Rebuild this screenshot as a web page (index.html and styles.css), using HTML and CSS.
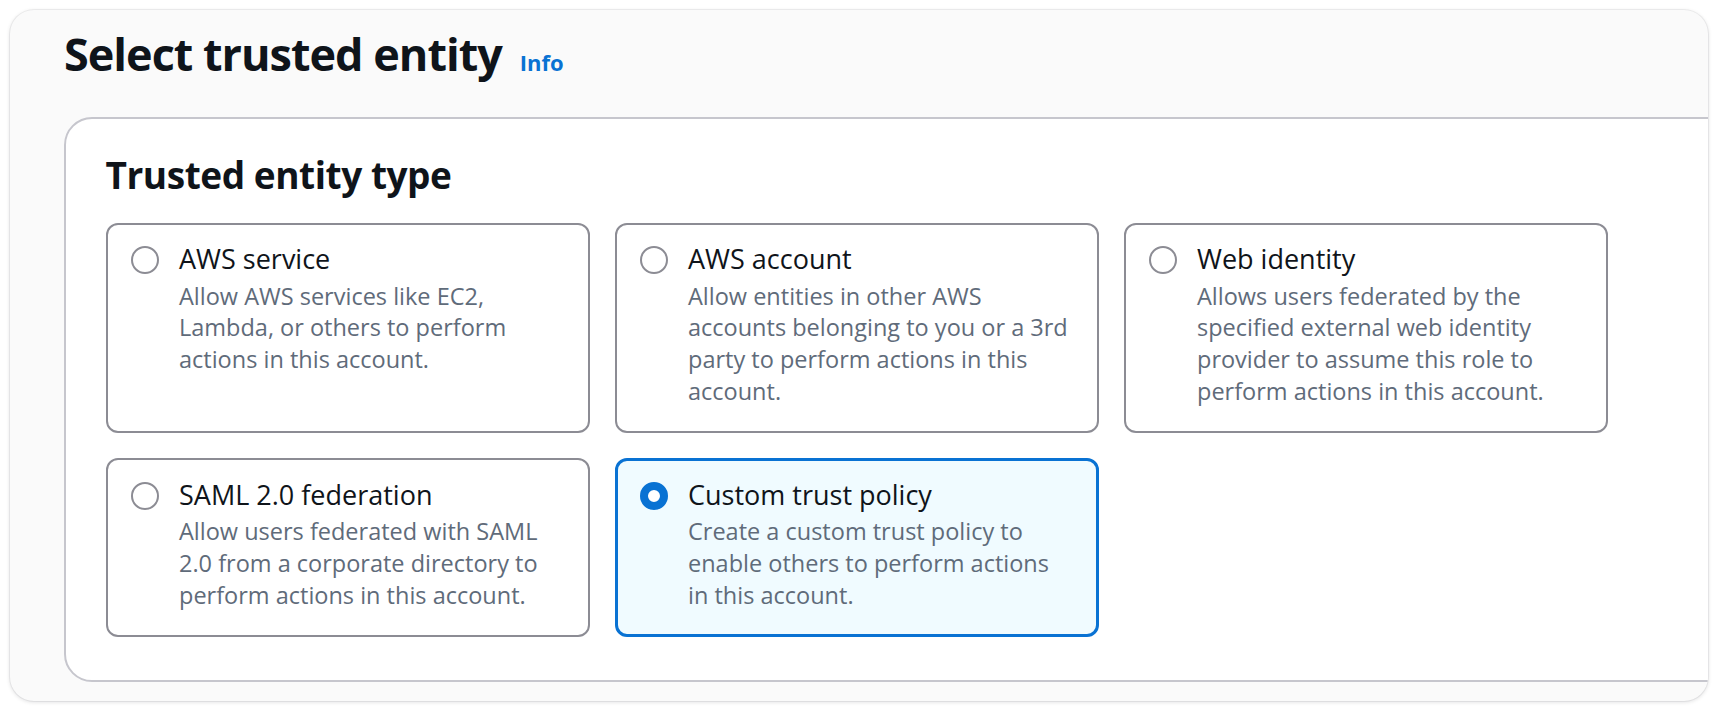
FILE: index.html
```html
<!DOCTYPE html>
<html lang="en">
<head>
<meta charset="utf-8">
<title>Select trusted entity</title>
<link rel="stylesheet" href="styles.css">
</head>
<body>
<div class="page">
  <section class="panel">
    <header class="panel-header">
      <h1 class="panel-title">Select trusted entity</h1>
      <a class="info-link" href="#">Info</a>
    </header>
    <div class="container">
      <h2 class="container-title">Trusted entity type</h2>
      <div class="tiles">
        <label class="tile">
          <span class="radio"></span>
          <span class="tile-body">
            <span class="tile-label">AWS service</span>
            <span class="tile-desc">Allow AWS services like EC2, Lambda, or others to perform actions in this account.</span>
          </span>
        </label>
        <label class="tile">
          <span class="radio"></span>
          <span class="tile-body">
            <span class="tile-label">AWS account</span>
            <span class="tile-desc">Allow entities in other AWS accounts belonging to you or a 3rd party to perform actions in this account.</span>
          </span>
        </label>
        <label class="tile">
          <span class="radio"></span>
          <span class="tile-body">
            <span class="tile-label">Web identity</span>
            <span class="tile-desc">Allows users federated by the specified external web identity provider to assume this role to perform actions in this account.</span>
          </span>
        </label>
        <label class="tile">
          <span class="radio"></span>
          <span class="tile-body">
            <span class="tile-label">SAML 2.0 federation</span>
            <span class="tile-desc">Allow users federated with SAML 2.0 from a corporate directory to perform actions in this account.</span>
          </span>
        </label>
        <label class="tile tile-selected">
          <span class="radio radio-checked"></span>
          <span class="tile-body">
            <span class="tile-label">Custom trust policy</span>
            <span class="tile-desc">Create a custom trust policy to enable others to perform actions in this account.</span>
          </span>
        </label>
      </div>
    </div>
  </section>
</div>
</body>
</html>
```

FILE: styles.css
```css
* {
  box-sizing: border-box;
}

html, body {
  margin: 0;
  padding: 0;
  background: #ffffff;
}

body {
  font-family: "Open Sans", "Noto Sans", sans-serif;
  color: #0f141a;
}

.page {
  padding: 10px 10px 11px 10px;
}

.panel {
  background: #fafafa;
  border-radius: 24px;
  box-shadow: 0 1px 4px rgba(0, 7, 22, 0.14), 0 0 0 1px rgba(0, 7, 22, 0.05);
  overflow: hidden;
  padding: 16px 0 22px 54px;
  height: 691px;
}

.panel-header {
  display: flex;
  align-items: baseline;
  gap: 18px;
}

.panel-title {
  margin: 0;
  font-size: 45px;
  line-height: 56px;
  font-weight: 700;
  letter-spacing: -1px;
}

.info-link {
  font-size: 22px;
  font-weight: 700;
  color: #0972d3;
  text-decoration: none;
}

.container {
  margin-top: 35px;
  margin-right: -60px;
  background: #ffffff;
  border: 2px solid #c6c6cd;
  border-radius: 28px;
  padding: 33px 0 43px 39.5px;
}

.container-title {
  margin: 0 0 24.5px 0;
  font-size: 37px;
  line-height: 46px;
  font-weight: 700;
  letter-spacing: -0.45px;
}

.tiles {
  display: grid;
  grid-template-columns: repeat(3, 484px);
  gap: 25px;
}

.tile {
  display: flex;
  align-items: flex-start;
  gap: 20px;
  border: 2px solid #8c8c94;
  border-radius: 12px;
  padding: 16.5px 26px 24px 23.5px;
  background: #ffffff;
  cursor: pointer;
}

.tile-selected {
  border: 3px solid #0972d3;
  background: #f0fbff;
  padding: 15.5px 25px 23px 22.5px;
}

.radio {
  flex: 0 0 28px;
  width: 28px;
  height: 28px;
  margin-top: 5px;
  border-radius: 50%;
  border: 2px solid #8c8c94;
  background: #ffffff;
}

.radio-checked {
  border: 8px solid #0972d3;
  background: #ffffff;
}

.tile-body {
  display: flex;
  flex-direction: column;
  min-width: 0;
}

.tile-label {
  font-size: 27px;
  line-height: 36px;
  color: #0f141a;
}

.tile-desc {
  margin-top: 3.5px;
  font-size: 23.5px;
  line-height: 31.7px;
  color: #5f6b7a;
}
```
